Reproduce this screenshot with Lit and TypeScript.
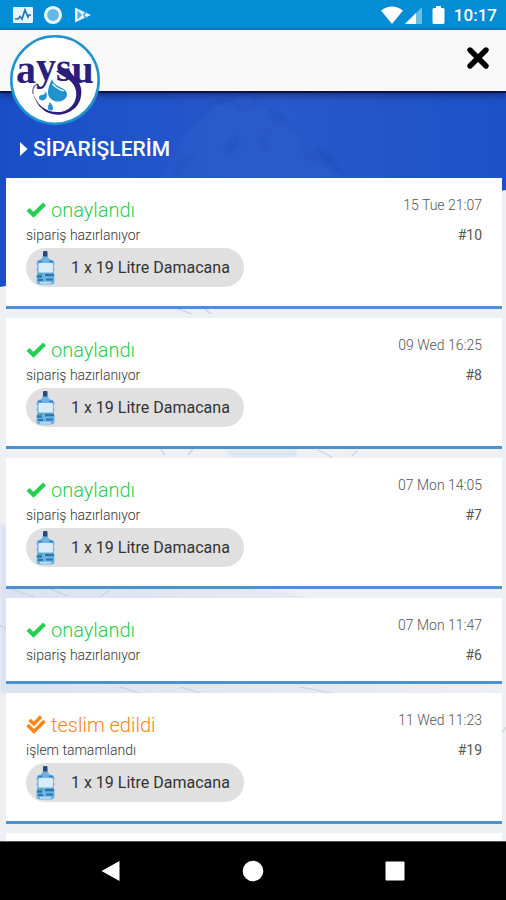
import { LitElement, html, svg, css, nothing } from "lit";
import { customElement, property } from "lit/decorators.js";

interface Order {
  state: "approved" | "delivered";
  title: string;
  note: string;
  date: string;
  no: string;
  item?: string;
}

const DAMACANA = "1 x 19 Litre Damacana";

const ORDERS: Order[] = [
  { state: "approved", title: "onaylandı", note: "sipariş hazırlanıyor", date: "15 Tue 21:07", no: "#10", item: DAMACANA },
  { state: "approved", title: "onaylandı", note: "sipariş hazırlanıyor", date: "09 Wed 16:25", no: "#8", item: DAMACANA },
  { state: "approved", title: "onaylandı", note: "sipariş hazırlanıyor", date: "07 Mon 14:05", no: "#7", item: DAMACANA },
  { state: "approved", title: "onaylandı", note: "sipariş hazırlanıyor", date: "07 Mon 11:47", no: "#6" },
  { state: "delivered", title: "teslim edildi", note: "işlem tamamlandı", date: "11 Wed 11:23", no: "#19", item: DAMACANA },
];

@customElement("status-bar")
export class StatusBar extends LitElement {
  static styles = css`
    :host {
      display: flex;
      align-items: center;
      justify-content: space-between;
      height: 30px;
      padding: 0 9px 0 12px;
      background: #028dd4;
      color: #fff;
      font: 500 17px/30px Roboto, sans-serif;
    }
    .group { display: flex; align-items: center; gap: 9px; }
    .icon { display: block; }
  `;
  render() {
    return html`
      <div class="group">
        <svg class="icon" width="22" height="20" viewBox="0 0 22 20" aria-hidden="true">
          <rect x="1" y="2" width="20" height="16" rx="1" fill="#e6f5fd" />
          <path d="M3 14h3l2-2.500 2 2.500 3-9 3 7 1-2h2" fill="none" stroke="#1b78b4" stroke-width="1.700" />
        </svg>
        <svg class="icon" width="20" height="20" viewBox="0 0 20 20" aria-hidden="true">
          <circle cx="10" cy="10" r="7.500" fill="#63b9e6" stroke="#e9f6fd" stroke-width="3.200" />
        </svg>
        <svg class="icon" width="20" height="20" viewBox="0 0 20 20" aria-hidden="true">
          <path d="M3 2.500 19 10 3 17.500Z" fill="#e2f3fc" />
          <path d="M5.500 5.500 10 10 5.500 14.500" fill="#4fb0e2" />
          <path d="M11.500 10 15 6M11.500 10 15 14" stroke="#2c9cda" stroke-width="1.200" />
        </svg>
      </div>
      <div class="group">
        <svg class="icon" width="42" height="20" viewBox="0 0 42 20" aria-hidden="true">
          <path d="M0 5.500Q11 -2.500 22 5.500L11 19Z" fill="#fff" />
          <path d="M41 2v17H24Z" fill="#6fbde6" />
          <path d="M35 8V19H24Z" fill="#fff" />
        </svg>
        <svg class="icon" width="13" height="20" viewBox="0 0 13 20" aria-hidden="true">
          <path d="M4 1h5v2h2q1.500 0 1.500 1.500v13q0 1.500-1.500 1.500H2Q.5 19 .5 17.500v-13Q.5 3 2 3h2Z" fill="#fff" />
        </svg>
        <span>10:17</span>
      </div>
    `;
  }
}

@customElement("brand-logo")
export class BrandLogo extends LitElement {
  static styles = css`
    :host { display: block; }
    .mark { display: block; }
    .word { font-family: "Liberation Serif", serif; font-weight: 700; font-size: 40px; fill: #2c1f7c; }
  `;
  render() {
    return html`
      <svg class="mark" width="90" height="90" viewBox="0 0 90 90" role="img" aria-label="aysu">
        <circle cx="45" cy="45" r="43.700" fill="#fff" stroke="#2093cf" stroke-width="2.600" />
        <path d="M46 36C52 42 64 44 66 56C68 70 56 78 47 77C36 77 26 70 23 57C26 73 38 81 51 79.500C66 77 73 66 71 53C69 43 60 40 59 33Z" fill="#2c1f7c" />
        <path d="M23 59C22 54 24 51 27 49" fill="none" stroke="#6b629f" stroke-width="1.200" />
        <path d="M42 44C38 52 36 60 41 64C47 69 56 66 57 60C58 52 44 53 42 44Z" fill="#2093cf" />
        <path d="M42.500 49Q47 54 54 56" fill="none" stroke="#fff" stroke-width="1.200" />
        <path d="M36 56C38 62 36 65.500 32 65.500C28 65 28 60 32 60Q35 60 36 56ZM40 67Q44 72 43 74.500Q40 76.500 38 74Q37.500 71 40 67Z" fill="#2093cf" />
        <text class="word" x="6" y="48">a<tspan dy="-3">y</tspan><tspan dy="1">s</tspan><tspan dy="2">u</tspan></text>
      </svg>
    `;
  }
}

@customElement("order-card")
export class OrderCard extends LitElement {
  @property({ attribute: false }) order!: Order;

  static styles = css`
    :host {
      display: block;
      padding: 20px 20px 19px;
      background: #fff;
      border-bottom: 3px solid #4a93d0;
      color: #333;
    }
    .row { display: flex; justify-content: space-between; align-items: center; }
    .title {
      display: flex;
      align-items: center;
      gap: 4px;
      margin: 0;
      font-size: 20px;
      line-height: 24px;
      font-weight: 300;
    }
    .approved { color: #24cf50; }
    .delivered { color: #fb8412; }
    .tick { display: block; }
    .date { font-size: 14px; line-height: 14px; font-weight: 300; color: #555; align-self: flex-start; }
    .detail { margin-top: 6px; font-size: 14px; line-height: 14px; font-weight: 300; }
    .note { margin: 0; }
    .no { font-weight: 400; color: #555; }
    .chip {
      display: inline-flex;
      align-items: center;
      gap: 12px;
      height: 39px;
      margin-top: 6px;
      padding: 0 14px 0 7px;
      border-radius: 20px;
      background: #e0e0e0;
      color: #333;
      font-size: 16px;
      vertical-align: top;
    }
    .bottle { display: block; }
  `;

  private tick() {
    return this.order.state === "approved"
      ? svg`<path d="M2 9.500 7.500 14.800 18.500 4" fill="none" stroke="currentColor" stroke-width="4.200" />`
      : svg`<g fill="none" stroke="currentColor" stroke-width="3.400">
          <path d="M3.500 5 8 9 15 1.500" /><path d="M1.500 10 8 16.500 18.500 6" />
        </g>`;
  }

  render() {
    const o = this.order;
    return html`
      <div class="row">
        <h2 class="title ${o.state}">
          <svg class="tick" width="21" height="20" viewBox="0 0 21 20" aria-hidden="true">${this.tick()}</svg>
          ${o.title}
        </h2>
        <time class="date">${o.date}</time>
      </div>
      <div class="row detail">
        <p class="note">${o.note}</p>
        <span class="no">${o.no}</span>
      </div>
      ${o.item
        ? html`<div class="chip">
            <svg class="bottle" width="26" height="36" viewBox="0 0 26 36" aria-hidden="true">
              <rect x="10" y="1" width="4.500" height="7" rx="1" fill="#27497c" />
              <path d="M9.500 6.500h5.500l1 2.500 4 1.500q1.500 1 1.500 3l-1 3 1 3-1 3 1 3v6q0 3-3.500 3H7q-3.500 0-3.500-3v-6l1-3-1-3 1-3-1-3q0-2 1.500-3l3.500-1.500Z" fill="#6db3e2" />
              <path d="M5 11.500h4M16 11.500h4" stroke="#2f7fc0" stroke-width="1.500" />
              <rect x="5.500" y="13" width="14.500" height="9.500" rx="1.500" fill="#d8ecfa" />
              <path d="M4 26.500h5M12 25h9" stroke="#2a78a8" stroke-width="2.500" />
              <path d="M5 24h5" stroke="#54a48d" stroke-width="1.500" />
              <path d="M5 30h5M13 29.500h7" stroke="#2b74b4" stroke-width="2" />
              <path d="M7 32.800h11" stroke="#b4dcf5" stroke-width="2" />
            </svg>
            <span>${o.item}</span>
          </div>`
        : nothing}
    `;
  }
}

@customElement("app-root")
export class AppRoot extends LitElement {
  static styles = css`
    :host {
      display: flex;
      flex-direction: column;
      height: 100vh;
      overflow: hidden;
      font-family: Roboto, sans-serif;
    }
    .header {
      position: relative;
      z-index: 1;
      display: flex;
      flex: none;
      justify-content: flex-end;
      height: 61px;
      background: #f8f8f8;
      border-bottom: 2px solid #0b1150;
      box-shadow: 0 2px 7px rgba(10, 25, 60, 0.6);
    }
    .logo { position: absolute; left: 10px; top: 5px; }
    .close {
      width: 56px;
      height: 56px;
      padding: 0;
      border: 0;
      background: none;
      display: grid;
      place-items: center;
    }
    .main {
      position: relative;
      flex: 1;
      min-height: 0;
      overflow: hidden;
      background: #eff0f4;
    }
    .backdrop { position: absolute; inset: 0; width: 100%; height: 100%; }
    .content { position: relative; padding: 44px 4px 0 6px; }
    .heading {
      display: flex;
      align-items: center;
      gap: 5px;
      margin: 0 0 17px 14px;
      color: #fff;
      font-size: 21px;
      line-height: 24px;
      font-weight: 500;
    }
    .list {
      display: flex;
      flex-direction: column;
      gap: 9px;
      margin: 0;
      padding: 0;
      list-style: none;
    }
    .next { height: 86px; background: #fff; }
    .nav {
      display: grid;
      flex: none;
      grid-template-columns: repeat(3, 28%);
      justify-content: center;
      height: 58px;
      background: #000;
      border-top: 1px solid #555;
    }
    .key { display: grid; place-items: center; padding: 0; border: 0; background: none; }
  `;

  render() {
    return html`
      <status-bar></status-bar>
      <header class="header">
        <brand-logo class="logo"></brand-logo>
        <button class="close" aria-label="Kapat">
          <svg width="24" height="24" viewBox="0 0 24 24" aria-hidden="true">
            <path d="M4 4 20 20M20 4 4 20" stroke="#000" stroke-width="5.400" stroke-linecap="round" />
          </svg>
        </button>
      </header>
      <main class="main">
        <svg class="backdrop" viewBox="0 0 506 748" preserveAspectRatio="none" aria-hidden="true">
          <defs>
            <linearGradient id="sky" x1="0" x2="1" y1="0" y2="0">
              <stop offset="0" stop-color="#1a4ec8" />
              <stop offset="0.550" stop-color="#2859ca" />
              <stop offset="1" stop-color="#1d51c6" />
            </linearGradient>
            <linearGradient id="slope" x1="0" x2="1" y1="0" y2="0">
              <stop offset="0" stop-color="#dbe2f0" />
              <stop offset="0.600" stop-color="#e6e9f2" />
              <stop offset="1" stop-color="#eeeff4" />
            </linearGradient>
            <filter id="soft"><feGaussianBlur stdDeviation="1.500" /></filter>
          </defs>
          <path d="M0 430 60 470 120 480 290 500 506 570V610L200 640 0 600Z" fill="url(#slope)" filter="url(#soft)" />
          <g fill="none" stroke="#c9d1e0" stroke-width="1.200">
            <path d="M178 216l14 5M205 216l6 5M160 355l5 7M188 362l5-6M318 357l14 7M352 363l5-5M10 496l24 8M50 496l18 7M100 504l10-7M120 594l22 7M180 594l24 7M300 594l36 7M0 532l6 4M502 640l4-6" />
          </g>
          <path d="M225 357h72v7h-66Z" fill="#dde5ef" filter="url(#soft)" />
          <path d="M0 0H506V97L0 194Z" fill="url(#sky)" />
          <g fill="#1c4bb8" opacity="0.400" filter="url(#soft)">
            <path d="M200 24 215 8 232 6 246 12 262 8 252 18 238 19 228 10 212 14 204 26Z" />
            <path d="M266 14 284 24 292 38 278 32 264 36 258 50 264 58 256 62 272 56 266 44 274 36Z" />
            <path d="M298 48 310 58 320 54 334 66 346 84 340 84 322 72 306 68Z" />
            <path d="M236 40 242 52 230 62 222 58ZM192 60 178 84 170 84 184 64Z" />
          </g>
          <path d="M160 84 190 36 215 12 245 4 284 28 310 54 345 84Z" fill="#4a73d2" opacity="0.140" filter="url(#soft)" />
        </svg>
        <div class="content">
          <h1 class="heading">
            <svg width="8" height="16" viewBox="0 0 8 16" aria-hidden="true"><path d="M0 1 7.500 8 0 15Z" fill="#fff" /></svg>
            SİPARİŞLERİM
          </h1>
          <ul class="list">
            ${ORDERS.map((o) => html`<li><order-card .order=${o}></order-card></li>`)}
            <li class="next"></li>
          </ul>
        </div>
      </main>
      <nav class="nav">
        <button class="key" aria-label="Geri">
          <svg width="20" height="22" viewBox="0 0 20 22" aria-hidden="true"><path d="M0.500 11 18.500 1V21Z" fill="#fff" /></svg>
        </button>
        <button class="key" aria-label="Ana ekran">
          <svg width="22" height="22" viewBox="0 0 22 22" aria-hidden="true"><circle cx="11" cy="11" r="10.300" fill="#fff" /></svg>
        </button>
        <button class="key" aria-label="Son uygulamalar">
          <svg width="20" height="20" viewBox="0 0 20 20" aria-hidden="true"><rect x="0.500" y="0.500" width="19" height="19" rx="1" fill="#fff" /></svg>
        </button>
      </nav>
    `;
  }
}
